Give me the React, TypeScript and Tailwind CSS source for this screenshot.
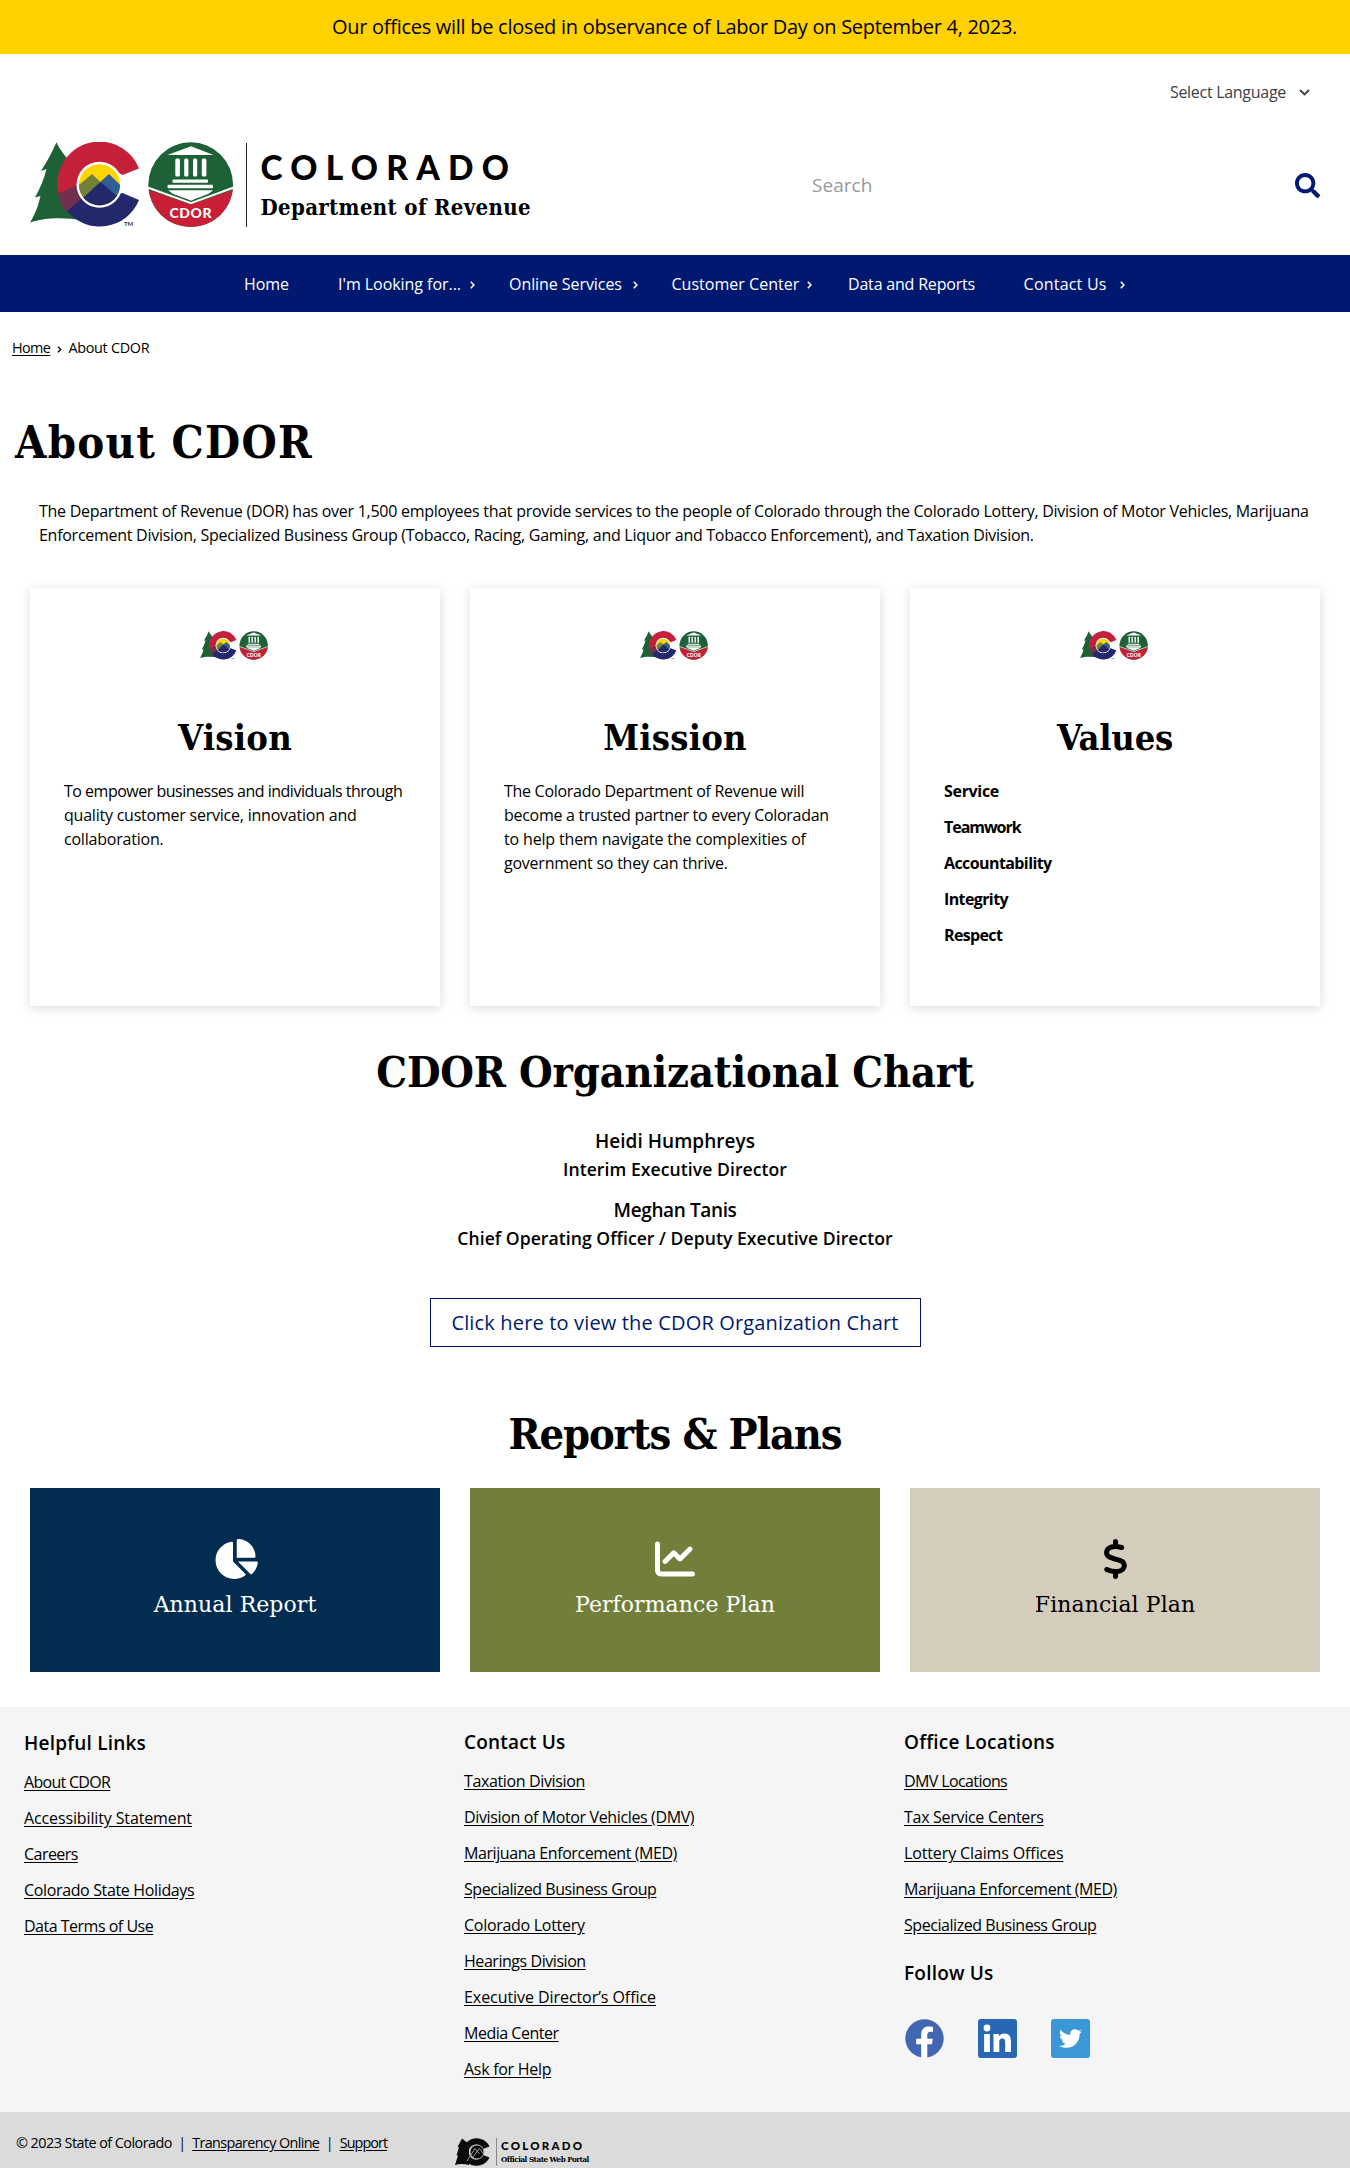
import React from "react";
import { FaChartLine, FaChartPie, FaDollarSign } from "react-icons/fa6";
import { FaSearch, FaTwitter } from "react-icons/fa";

const sans = "font-['Open_Sans',sans-serif]";
const slab = "font-['DejaVu_Serif_Condensed','DejaVu_Serif',serif] font-bold";

function Emblem({ className }: { className: string }) {
  return (
    <svg viewBox="30 142.5 203.5 85.5" className={className} aria-label="Colorado Department of Revenue">
      <path
        d="M56.4 142.7 C52 153 47 162 41 171.5 L46.5 169.5 C44 180 40 189 35 198 L40.5 196.5 C38 207 35 215 30 223 C44 218 66 217.5 82 221 L92 190 L74 168 C70 161 61 153 56.4 142.7Z"
        fill="#1f6137"
      />
      <path d="M139 169 A42.3 42.3 0 1 0 68 212.5 L86 198 L84 175 L100 163 L122.5 175.5Z" fill="#c5203a" />
      <path d="M58 194 L78 185 L86 198 L67 213 C62 207 59 201 58 194Z" fill="#723050" />
      <path d="M67 211.5 L84 197 L122.5 193.5 L139 200.5 A42.3 42.3 0 0 1 67 211.5Z" fill="#22286b" />
      <circle cx="99.5" cy="185.3" r="23" fill="#fff" />
      <clipPath id="sky">
        <circle cx="99.5" cy="185.3" r="20.6" />
      </clipPath>
      <g clipPath="url(#sky)">
        <rect x="76" y="162" width="47" height="47" fill="#fed500" />
        <path d="M70 193 L92 174.500 L104 186 L86 212Z" fill="#74803a" />
        <path d="M92 190 L109 174.500 L128 193 L120 212Z" fill="#2f5f91" />
        <path d="M70 210 L100.700 182.500 L124 203 L124 212 L70 212Z" fill="#22286b" />
      </g>
      <text x="124" y="226.500" fontSize="6" className="font-['Lato',sans-serif] font-bold" fill="#333">
        TM
      </text>
      <circle cx="190.700" cy="185.200" r="42.400" fill="#1f6137" />
      <path d="M148.700 190.500 L191 205 L232.800 190.500 A42.400 42.400 0 0 1 148.700 190.500Z" fill="#c91f36" />
      <path d="M148.300 188.300 L191 203.700 L233.100 188.300" fill="none" stroke="#fff" strokeWidth="2" />
      <g fill="#fff">
        <path d="M167.500 155.500 L191 146.700 L213.500 155.500Z" />
        <rect x="175.300" y="159" width="4.600" height="18" rx="1.500" />
        <rect x="184.200" y="159" width="4.200" height="18" rx="1.500" />
        <rect x="193" y="159" width="4.200" height="18" rx="1.500" />
        <rect x="201.800" y="159" width="4.600" height="18" rx="1.500" />
        <rect x="172.500" y="180" width="35.500" height="3.300" rx="1" />
        <rect x="167.500" y="185.300" width="45.500" height="3.500" rx="1" />
        <path d="M168.500 190.800 H213 C208 196 200 197 191 201.300 C182 197 173 196 168.500 190.800Z" />
      </g>
      <text
        x="190.900"
        y="218.800"
        textAnchor="middle"
        fontSize="14"
        letterSpacing="0.6"
        className="font-['Lato',sans-serif] font-black"
        fill="#fff"
      >
        CDOR
      </text>
    </svg>
  );
}

function PortalMark() {
  return (
    <svg viewBox="0 0 36 28" className="h-[28px] w-[36px]">
      <path d="M7 0.500 L2.500 9 L4 9 L1.500 17.500 L3 17.500 L0 27 Q6 25 14 27 L14 6Z" fill="#0b0b0b" />
      <path d="M34.500 8.500 A14 13.800 0 1 0 34.500 19.500 L28 17 A7.500 7.500 0 1 1 28 11Z" fill="#0b0b0b" />
      <circle cx="22" cy="14" r="7" fill="#0b0b0b" stroke="#bbb" strokeWidth="0.900" />
      <path d="M12 23 L20 10.500 L24.500 16 M17 20 L24.500 10.500 L28.500 16" fill="none" stroke="#bbb" strokeWidth="0.800" />
    </svg>
  );
}

function Chevron({ className }: { className: string }) {
  return (
    <svg viewBox="0 0 5 8" className={className} fill="none" stroke="currentColor" strokeWidth="1.500">
      <path d="M0.800 0.800 L3.900 4 L0.800 7.200" />
    </svg>
  );
}

const navItems = [
  { label: "Home", box: "w-[94px]", text: "tracking-[-0.003em]" },
  { label: "I'm Looking for...", box: "w-[171px]", text: "tracking-[-0.003em]", gap: "ml-[9px]" },
  { label: "Online Services", box: "w-[162.5px]", text: "tracking-[-0.004em]", gap: "ml-[11px]" },
  { label: "Customer Center", box: "w-[176.5px]", text: "tracking-[0.002em]", gap: "ml-[8px]" },
  { label: "Data and Reports", box: "w-[175.6px]", text: "tracking-[-0.012em]" },
  { label: "Contact Us", box: "w-[106px]", text: "tracking-[0.013em]", gap: "ml-[13.5px]" },
];

function Header() {
  return (
    <header>
      <div className="flex h-[54px] items-center justify-center bg-[#ffd100] pr-[1px] text-[20px] tracking-[-0.014em]">
        Our offices will be closed in observance of Labor Day on September 4, 2023.
      </div>
      <div className="flex h-[76px] items-center justify-end pr-[40px] text-[16px] text-[#3c4043]">
        <span className="tracking-[-0.018em]">Select Language</span>
        <svg viewBox="0 0 11 7" className="ml-[13px] h-[7px] w-[11px]" fill="none" stroke="#444" strokeWidth="1.900">
          <path d="M1 1 L5.500 5.500 L10 1" />
        </svg>
      </div>
      <div className="flex h-[109px] items-center pt-[1px] pl-[30px]">
        <Emblem className="h-[85.5px] w-[203.5px]" />
        <div className="ml-[12px] h-[84px] w-[1.5px] bg-[#222]" />
        <div className="ml-[13.5px] w-[551.5px]">
          <div className="pb-[5px] text-[33.5px] leading-[38px] font-black tracking-[0.247em] font-['Lato',sans-serif]">
            COLORADO
          </div>
          <div className={`${slab} text-[22px] leading-[32px] tracking-[0.016em]`}>Department of Revenue</div>
        </div>
        <span className="w-[482.5px] text-[19px] tracking-[0.002em] text-[#999]">Search</span>
        <FaSearch className="size-[25px] text-[#001970]" />
      </div>
      <div className="h-[16px]" />
      <nav className="flex h-[57px] items-center bg-[#001970] pl-[244px] text-[16px] text-white">
        {navItems.map((n) => (
          <a key={n.label} className={`flex shrink-0 items-center whitespace-nowrap ${n.box}`}>
            <span className={n.text}>{n.label}</span>
            {n.gap && <Chevron className={`mt-[3px] h-[8px] w-[5px] ${n.gap}`} />}
          </a>
        ))}
      </nav>
    </header>
  );
}

const cardText = "text-[16px] leading-[24px]";

function Card({ title, track, children }: { title: string; track: string; children: React.ReactNode }) {
  return (
    <section className="flex h-[418px] flex-1 flex-col bg-white px-[34px] pt-[43px] shadow-[0_2px_10px_rgba(0,0,0,0.15)]">
      <Emblem className="mr-[2px] h-[29px] w-[68px] self-center" />
      <h2 className={`${slab} ${track} mt-[55px] mb-[20px] text-center text-[36px] leading-[44px]`}>{title}</h2>
      {children}
    </section>
  );
}

const values = [
  { label: "Service", text: "tracking-[-0.020em]" },
  { label: "Teamwork", text: "tracking-[-0.065em]" },
  { label: "Accountability", text: "tracking-[-0.037em]" },
  { label: "Integrity", text: "tracking-[-0.038em]" },
  { label: "Respect", text: "tracking-[-0.040em]" },
];

const reports = [
  { label: "Annual Report", Icon: FaChartPie, box: "bg-[#032d50] text-white", icon: "h-[40px] w-[45px]" },
  { label: "Performance Plan", Icon: FaChartLine, box: "bg-[#727f3b] text-white", icon: "size-[40px]" },
  { label: "Financial Plan", Icon: FaDollarSign, box: "bg-[#d5cdbc] text-black", icon: "h-[40px] w-[25px]" },
];

type FooterLink = { label: string; text: string };

const helpful: FooterLink[] = [
  { label: "About CDOR", text: "tracking-[-0.044em]" },
  { label: "Accessibility Statement", text: "tracking-[-0.008em]" },
  { label: "Careers", text: "tracking-[-0.034em]" },
  { label: "Colorado State Holidays", text: "tracking-[-0.022em]" },
  { label: "Data Terms of Use", text: "tracking-[-0.031em]" },
];
const contact: FooterLink[] = [
  { label: "Taxation Division", text: "tracking-[-0.023em]" },
  { label: "Division of Motor Vehicles (DMV)", text: "tracking-[-0.023em]" },
  { label: "Marijuana Enforcement (MED)", text: "tracking-[-0.026em]" },
  { label: "Specialized Business Group", text: "tracking-[-0.028em]" },
  { label: "Colorado Lottery", text: "tracking-[-0.018em]" },
  { label: "Hearings Division", text: "tracking-[-0.028em]" },
  { label: "Executive Director’s Office", text: "tracking-[-0.004em]" },
  { label: "Media Center", text: "tracking-[-0.030em]" },
  { label: "Ask for Help", text: "tracking-[-0.018em]" },
];
const offices: FooterLink[] = [
  { label: "DMV Locations", text: "tracking-[-0.038em]" },
  { label: "Tax Service Centers", text: "tracking-[-0.018em]" },
  { label: "Lottery Claims Offices", text: "tracking-[-0.008em]" },
  { label: "Marijuana Enforcement (MED)", text: "tracking-[-0.026em]" },
  { label: "Specialized Business Group", text: "tracking-[-0.028em]" },
];

const footHeading = "text-[19px] leading-[28px] font-semibold tracking-[0.011em]";

function FooterColumn({ title, links, children }: { title: string; links: FooterLink[]; children?: React.ReactNode }) {
  return (
    <div className="w-[440px]">
      <h3 className={footHeading}>{title}</h3>
      <ul className="mt-[13px] flex flex-col gap-[12px]">
        {links.map((l) => (
          <li key={l.label} className={`text-[16px] leading-[24px] ${l.text}`}>
            <a className="underline underline-offset-2">{l.label}</a>
          </li>
        ))}
      </ul>
      {children}
    </div>
  );
}

function Social() {
  return (
    <div className="mt-[32px] ml-[1px] flex gap-[34px]">
      <svg viewBox="0 0 39 39" className="size-[39px]">
        <circle cx="19.500" cy="19.500" r="19.200" fill="#4267b2" />
        <path
          d="M16.200 39 V25.300 H11.200 V19.800 H16.200 V15.500 C16.200 10.400 19.200 7.600 23.700 7.600 C25.900 7.600 28 8 28 8 V12.800 H25.500 C23 12.800 22.300 14.300 22.300 15.900 V19.800 H27.800 L26.900 25.300 H22.300 V39Z"
          fill="#fff"
        />
      </svg>
      <svg viewBox="0 0 39 39" className="size-[39px]">
        <rect width="39" height="39" rx="3" fill="#2867b2" />
        <circle cx="9" cy="9" r="3.400" fill="#fff" />
        <path
          d="M6.100 15 H11.900 V33 H6.100Z M15.500 15 H21 V17.500 C22 15.700 24 14.500 26.500 14.500 C32 14.500 33 18.200 33 23 V33 H27.200 V24 C27.200 21.800 27 19.500 24.300 19.500 C21.600 19.500 21.300 21.700 21.300 24 V33 H15.500Z"
          fill="#fff"
        />
      </svg>
      <div className="flex size-[39px] items-center justify-center rounded-[3px] bg-[#3a98d6]">
        <FaTwitter className="size-[23px] text-white" />
      </div>
    </div>
  );
}

export default function App() {
  return (
    <div className={`${sans} h-[2168px] w-[1350px] overflow-hidden bg-white text-black`}>
      <Header />
      <div className="flex items-center pt-[24px] pl-[12px] text-[14.4px] leading-[24px]">
        <a className="underline underline-offset-2 tracking-[-0.040em]">Home</a>
        <Chevron className="mt-[2px] mr-[6px] ml-[7px] h-[7px] w-[5px]" />
        <span className="tracking-[-0.020em]">About CDOR</span>
      </div>

      <main>
        <h1 className={`${slab} mt-[56px] pl-[15px] text-[45px] leading-[54px] tracking-[0.028em]`}>About CDOR</h1>
        <p className="mt-[29px] pl-[39px] text-[16px] leading-[24px] whitespace-nowrap tracking-[-0.017em]">
          The Department of Revenue (DOR) has over 1,500 employees that provide services to the people of Colorado
          through the Colorado Lottery, Division of Motor Vehicles, Marijuana
          <br />
          Enforcement Division, Specialized Business Group (Tobacco, Racing, Gaming, and Liquor and Tobacco
          Enforcement), and Taxation Division.
        </p>

        <div className="mt-[41px] flex gap-[30px] px-[30px]">
          <Card title="Vision" track="tracking-[0.007em]">
            <p className={cardText}>
              <span className="tracking-[-0.031em]">To empower businesses and individuals through</span>
              <br />
              <span className="tracking-[-0.014em]">quality customer service, innovation and</span>
              <br />
              <span className="tracking-[-0.013em]">collaboration.</span>
            </p>
          </Card>
          <Card title="Mission" track="tracking-[0.006em]">
            <p className={cardText}>
              <span className="tracking-[-0.018em]">The Colorado Department of Revenue will</span>
              <br />
              <span className="tracking-[-0.018em]">become a trusted partner to every Coloradan</span>
              <br />
              <span className="tracking-[-0.010em]">to help them navigate the complexities of</span>
              <br />
              <span className="tracking-[-0.015em]">government so they can thrive.</span>
            </p>
          </Card>
          <Card title="Values" track="tracking-[-0.007em]">
            <ul className={`${cardText} flex flex-col gap-[12px] font-bold`}>
              {values.map((v) => (
                <li key={v.label} className={v.text}>
                  {v.label}
                </li>
              ))}
            </ul>
          </Card>
        </div>

        <div className="flex flex-col items-center text-center">
          <h2 className={`${slab} mt-[40px] text-[43px] leading-[52px] tracking-[-0.004em]`}>
            CDOR Organizational Chart
          </h2>
          <div className="mt-[29px] text-[19px] leading-[28px] font-semibold tracking-[0.002em]">Heidi Humphreys</div>
          <div className="text-[17.6px] leading-[28px] font-semibold tracking-[0.003em]">Interim Executive Director</div>
          <div className="mt-[13px] text-[19px] leading-[28px] font-semibold tracking-[-0.020em]">Meghan Tanis</div>
          <div className="text-[17.6px] leading-[28px] font-semibold tracking-[0.002em]">
            Chief Operating Officer / Deputy Executive Director
          </div>
          <a className="mt-[46px] flex h-[49px] w-[491px] items-center justify-center border border-[#001970] text-[20px] tracking-[0.008em] text-[#001970]">
            Click here to view the CDOR Organization Chart
          </a>
          <h2 className={`${slab} mt-[61px] text-[43px] leading-[52px] tracking-[-0.027em]`}>Reports &amp; Plans</h2>
        </div>

        <div className="mt-[28px] flex gap-[30px] px-[30px]">
          {reports.map(({ label, Icon, box, icon }) => (
            <a key={label} className={`flex h-[184px] flex-1 flex-col items-center pt-[51px] ${box}`}>
              <Icon className={icon} preserveAspectRatio="xMidYMid meet" />
              <span className="mt-[10px] text-[22px] leading-[32px] tracking-[0.003em] font-['DejaVu_Serif',serif]">
                {label}
              </span>
            </a>
          ))}
        </div>
      </main>

      <footer className="mt-[35px]">
        <div className="flex h-[405px] bg-[#f5f5f5] pt-[21px] pl-[24px]">
          <div className="pt-[1px]">
            <FooterColumn title="Helpful Links" links={helpful} />
          </div>
          <FooterColumn title="Contact Us" links={contact} />
          <FooterColumn title="Office Locations" links={offices}>
            <h3 className={`${footHeading} mt-[22px]`}>Follow Us</h3>
            <Social />
          </FooterColumn>
        </div>
        <div className="flex h-[56px] bg-[#dbdbdb] pl-[16px]">
          <div className="w-[439px] pt-[19px] text-[14.4px] leading-[24px] whitespace-nowrap">
            <span className="tracking-[-0.038em]">© 2023 State of Colorado</span>
            <span className="mr-[6px] ml-[6.5px]">|</span>
            <a className="underline underline-offset-2 tracking-[-0.044em]">Transparency Online</a>
            <span className="mr-[6px] ml-[6.5px]">|</span>
            <a className="underline underline-offset-2 tracking-[-0.065em]">Support</a>
          </div>
          <div className="flex pt-[26px]">
            <PortalMark />
            <div className="ml-[5px] h-[28px] w-px bg-[#888]" />
            <div className="ml-[4px]">
              <div className="text-[11.5px] leading-[15px] font-black tracking-[0.195em] font-['Lato',sans-serif]">
                COLORADO
              </div>
              <div className={`${slab} text-[8px] leading-[13px] tracking-[-0.060em] whitespace-nowrap`}>
                Official State Web Portal
              </div>
            </div>
          </div>
        </div>
      </footer>
    </div>
  );
}
